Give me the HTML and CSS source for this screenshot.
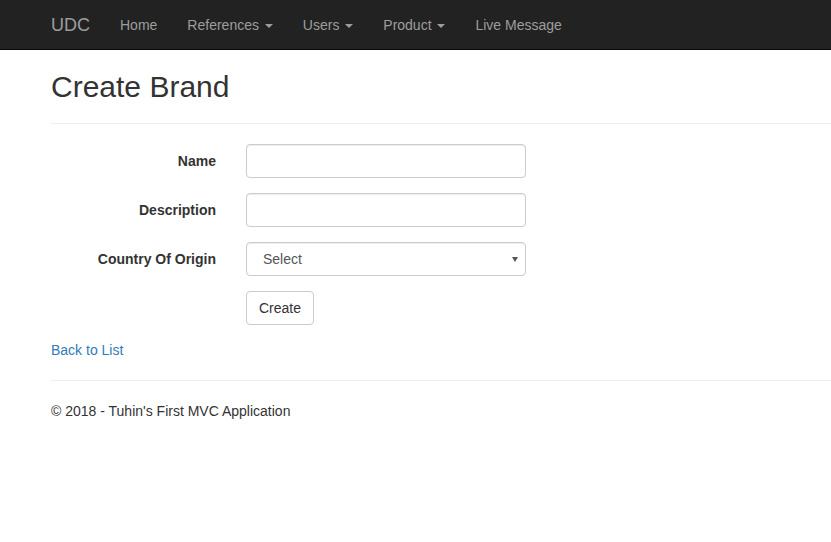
FILE: index.html
```html
<!DOCTYPE html>
<html>
<head>
<meta charset="utf-8">
<title>Create Brand</title>
<link rel="stylesheet" href="styles.css">
</head>
<body>
<nav class="navbar">
  <a class="brand" href="#">UDC</a>
  <ul class="nav">
    <li><a href="#">Home</a></li>
    <li><a href="#">References <span class="caret"></span></a></li>
    <li><a href="#">Users <span class="caret"></span></a></li>
    <li><a href="#">Product <span class="caret"></span></a></li>
    <li><a href="#">Live Message</a></li>
  </ul>
</nav>
<main class="container">
  <h2 class="title">Create Brand</h2>
  <hr class="rule">
  <form class="form">
    <div class="form-group">
      <label class="label" for="name">Name</label>
      <input class="control" id="name" type="text">
    </div>
    <div class="form-group">
      <label class="label" for="desc">Description</label>
      <input class="control" id="desc" type="text">
    </div>
    <div class="form-group">
      <label class="label" for="country">Country Of Origin</label>
      <div class="select-wrap">
        <select class="control select" id="country">
          <option>Select</option>
        </select>
      </div>
    </div>
    <div class="form-group">
      <span class="label"></span>
      <button class="btn" type="button">Create</button>
    </div>
  </form>
  <div class="back"><a href="#">Back to List</a></div>
  <hr class="rule">
  <footer class="footer">
    <p>&copy; 2018 - Tuhin's First MVC Application</p>
  </footer>
</main>
</body>
</html>
```
FILE: styles.css
```css
* { box-sizing: border-box; }
html, body { margin: 0; padding: 0; }
body {
  font-family: "Liberation Sans", Arial, sans-serif;
  font-size: 14px;
  line-height: 20px;
  color: #333;
  background: #fff;
}
a { text-decoration: none; }

.navbar {
  height: 50px;
  background: #222;
  border-bottom: 1px solid #080808;
  display: flex;
  align-items: flex-start;
  padding-left: 36px;
}
.brand {
  display: block;
  padding: 15px 15px;
  font-size: 18px;
  line-height: 20px;
  color: #9d9d9d;
}
.nav {
  list-style: none;
  margin: 0;
  padding: 0;
  display: flex;
}
.nav a {
  display: block;
  padding: 15px 15px;
  line-height: 20px;
  color: #9d9d9d;
}
.caret {
  display: inline-block;
  width: 0;
  height: 0;
  margin-left: 2px;
  vertical-align: middle;
  border-top: 4px solid #9d9d9d;
  border-left: 4px solid transparent;
  border-right: 4px solid transparent;
}

.container {
  padding-left: 51px;
}
.title {
  margin: 20px 0 10px;
  font-size: 30px;
  font-weight: 500;
  line-height: 33px;
  color: #333;
}
.rule {
  margin: 20px 0;
  border: 0;
  border-top: 1px solid #eee;
}
.form-group {
  display: flex;
  align-items: center;
  margin-bottom: 15px;
}
.label {
  width: 165px;
  text-align: right;
  font-weight: bold;
  margin-right: 30px;
  color: #333;
}
.control {
  width: 280px;
  height: 34px;
  padding: 6px 12px;
  font-family: inherit;
  font-size: 14px;
  line-height: 20px;
  color: #555;
  background: #fff;
  border: 1px solid #ccc;
  border-radius: 4px;
  box-shadow: inset 0 1px 1px rgba(0,0,0,.075);
  margin: 0;
}
.select-wrap {
  position: relative;
  width: 280px;
}
.select {
  display: block;
  -webkit-appearance: none;
  appearance: none;
  padding-left: 16px;
}
.select-wrap::after {
  content: "";
  position: absolute;
  right: 8px;
  top: 15px;
  width: 0;
  height: 0;
  border-top: 5px solid #555;
  border-left: 3px solid transparent;
  border-right: 3px solid transparent;
  pointer-events: none;
}
.btn {
  height: 34px;
  padding: 6px 12px;
  font-family: inherit;
  font-size: 14px;
  line-height: 20px;
  color: #333;
  background: #fff;
  border: 1px solid #ccc;
  border-radius: 4px;
}
.back { line-height: 20px; }
.back a { color: #337ab7; }
.footer p { margin: 0 0 10px; }
```
